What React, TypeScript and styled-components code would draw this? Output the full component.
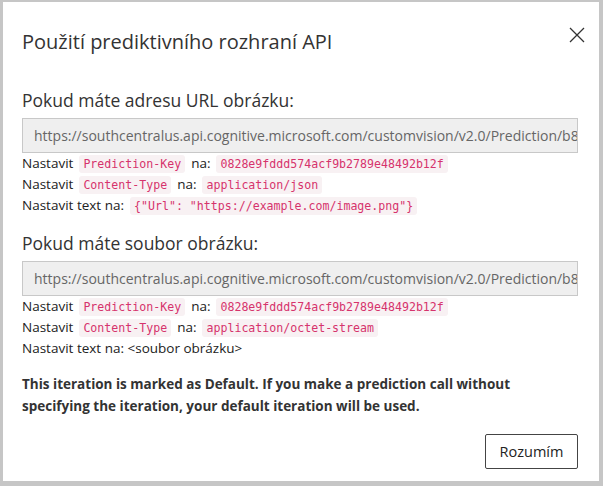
import React from "react";
import styled, { createGlobalStyle } from "styled-components";

const GlobalStyle = createGlobalStyle`
  html, body {
    margin: 0;
    padding: 0;
    background: #c6c6c6;
  }
  body {
    font-family: "Open Sans", "Noto Sans", sans-serif;
    color: #333;
  }
`;

const Frame = styled.div`
  width: 603px;
  height: 486px;
  box-sizing: border-box;
  padding: 2px 4px 5px 3px;
`;

const Dialog = styled.div`
  background: #fff;
  height: 100%;
  box-sizing: border-box;
  padding: 0 21px 0 19px;
  display: flex;
  flex-direction: column;
`;

const Header = styled.div`
  display: flex;
  align-items: flex-start;
  justify-content: space-between;
  padding-top: 26px;
  margin-bottom: 33px;
`;

const Title = styled.h1`
  margin: 0;
  font-size: 20px;
  line-height: 27px;
  font-weight: 400;
  color: #333;
`;

const CloseButton = styled.button`
  border: 0;
  background: none;
  padding: 0;
  width: 16px;
  height: 16px;
  display: flex;
  align-items: center;
  justify-content: center;
  margin-right: -7px;
  margin-top: -1px;
  cursor: pointer;
`;

const Section = styled.section<{ $gap?: number }>`
  display: flex;
  flex-direction: column;
  margin-top: ${(p) => p.$gap ?? 0}px;
`;

const SectionTitle = styled.h2`
  margin: 0 0 6px;
  font-size: 17.5px;
  font-weight: 400;
  color: #333;
  line-height: 24px;
`;

const UrlBox = styled.div`
  height: 35px;
  box-sizing: border-box;
  border: 1px solid #c8c8c8;
  background: #efefef;
  color: #666;
  font-size: 14px;
  padding: 0 11px;
  display: flex;
  align-items: center;
  white-space: nowrap;
  overflow: hidden;
`;

const Line = styled.div`
  font-size: 13.5px;
  line-height: 21px;
  height: 21px;
  color: #222;
  white-space: nowrap;
`;

const Code = styled.code`
  font-family: "DejaVu Sans Mono", "Liberation Mono", monospace;
  font-size: 11.6px;
  color: #d6336c;
  background: #f8f1f3;
  border-radius: 3px;
  padding: 2px 4px;
  margin: 0 6px;
`;

const Note = styled.p`
  margin: 14px 0 0;
  font-size: 13.5px;
  font-weight: 700;
  line-height: 22px;
  color: #333;
`;

const Footer = styled.div`
  display: flex;
  justify-content: flex-end;
  margin-top: 17px;
`;

const Button = styled.button`
  width: 93px;
  height: 35px;
  border: 1px solid #444;
  border-radius: 2px;
  background: #fff;
  font-family: "Open Sans", "Noto Sans", sans-serif;
  font-size: 14.5px;
  color: #222;
  cursor: pointer;
`;

const URL =
  "https://southcentralus.api.cognitive.microsoft.com/customvision/v2.0/Prediction/b8c";
const KEY = "0828e9fddd574acf9b2789e48492b12f";

export default function App() {
  return (
    <>
      <GlobalStyle />
      <Frame>
        <Dialog>
          <Header>
            <Title>Použití prediktivního rozhraní API</Title>
            <CloseButton aria-label="Zavřít">
              <svg width="16" height="16" viewBox="0 0 16 16">
                <path d="M1 1L15 15M15 1L1 15" stroke="#333" strokeWidth="1.3" fill="none" />
              </svg>
            </CloseButton>
          </Header>

          <Section>
            <SectionTitle>Pokud máte adresu URL obrázku:</SectionTitle>
            <UrlBox>{URL}</UrlBox>
            <Line>
              Nastavit<Code>Prediction-Key</Code>na:<Code>{KEY}</Code>
            </Line>
            <Line>
              Nastavit<Code>Content-Type</Code>na:<Code>application/json</Code>
            </Line>
            <Line>
              Nastavit text na:<Code>{'{"Url": "https://example.com/image.png"}'}</Code>
            </Line>
          </Section>

          <Section $gap={15}>
            <SectionTitle>Pokud máte soubor obrázku:</SectionTitle>
            <UrlBox>{URL}</UrlBox>
            <Line>
              Nastavit<Code>Prediction-Key</Code>na:<Code>{KEY}</Code>
            </Line>
            <Line>
              Nastavit<Code>Content-Type</Code>na:<Code>application/octet-stream</Code>
            </Line>
            <Line>Nastavit text na: &lt;soubor obrázku&gt;</Line>
          </Section>

          <Note>
            This iteration is marked as Default. If you make a prediction call without
            specifying the iteration, your default iteration will be used.
          </Note>

          <Footer>
            <Button>Rozumím</Button>
          </Footer>
        </Dialog>
      </Frame>
    </>
  );
}
